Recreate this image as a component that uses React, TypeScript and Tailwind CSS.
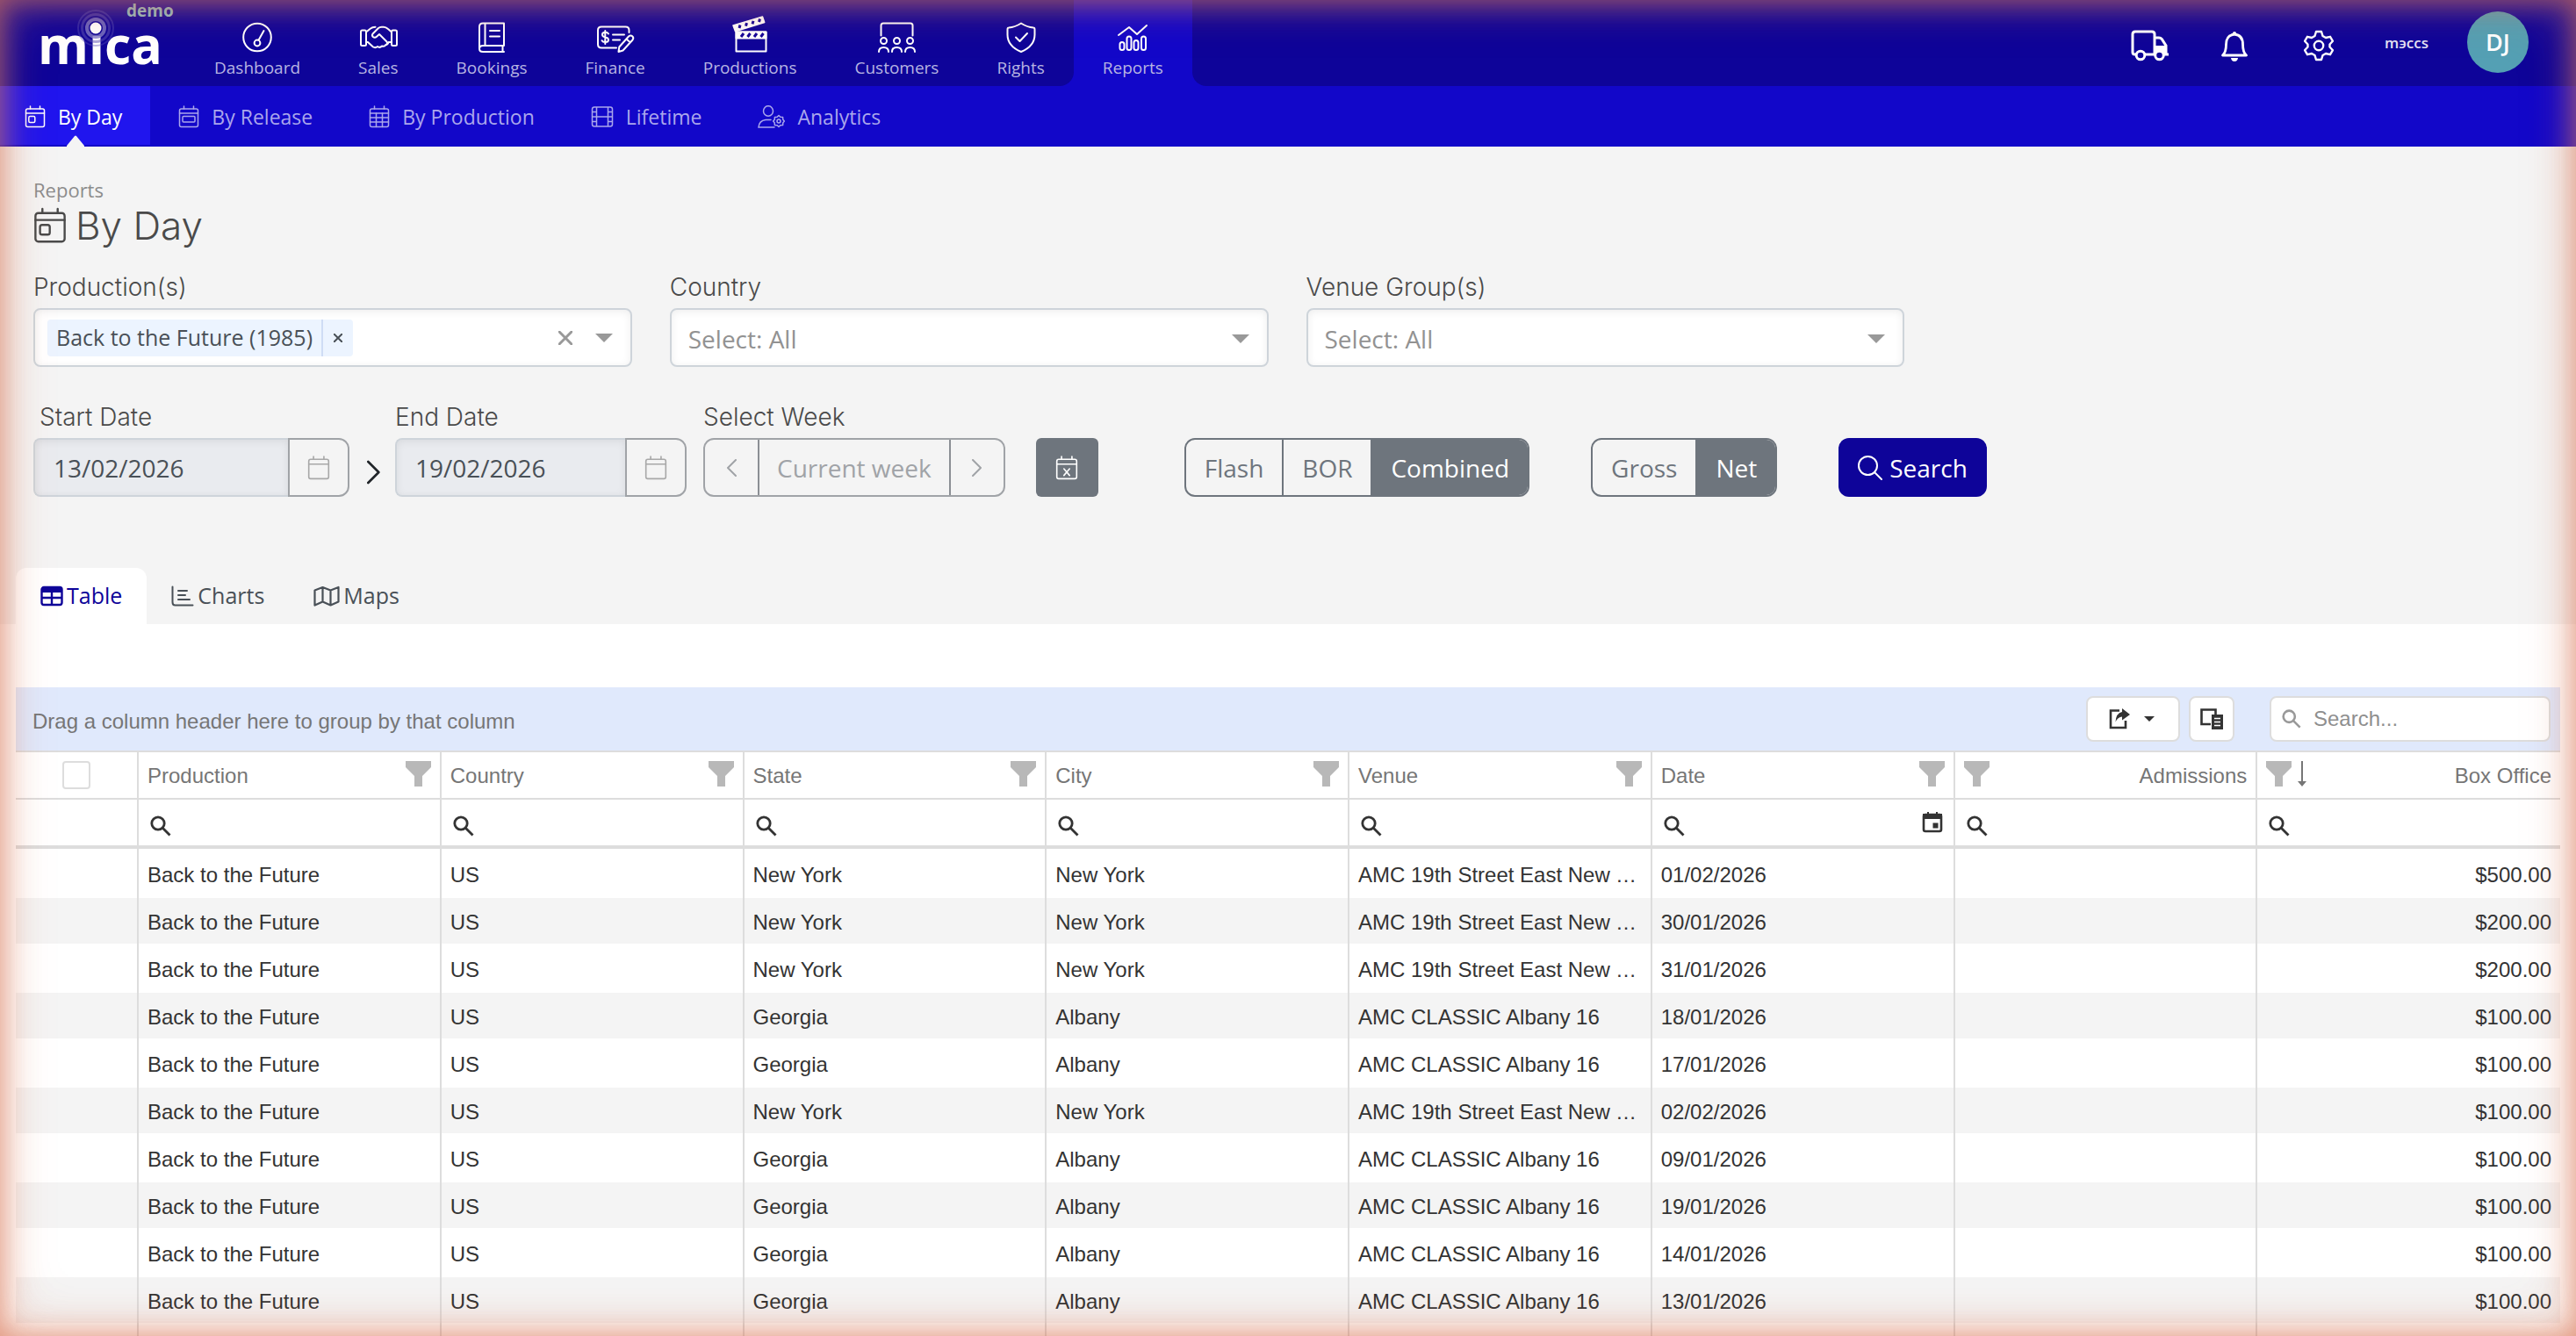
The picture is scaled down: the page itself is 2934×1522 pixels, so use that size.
import type { ReactNode } from "react";
import clsx from "clsx";

type Column = {
  name: string;
  numeric?: boolean;
  date?: boolean;
  sorted?: boolean;
};

const columns: Column[] = [
  { name: "Production" },
  { name: "Country" },
  { name: "State" },
  { name: "City" },
  { name: "Venue" },
  { name: "Date", date: true },
  { name: "Admissions", numeric: true },
  { name: "Box Office", numeric: true, sorted: true },
];

const east = "AMC 19th Street East New York";
const albany = "AMC CLASSIC Albany 16";

const rows = [
  ["Back to the Future", "US", "New York", "New York", east, "01/02/2026", "", "$500.00"],
  ["Back to the Future", "US", "New York", "New York", east, "30/01/2026", "", "$200.00"],
  ["Back to the Future", "US", "New York", "New York", east, "31/01/2026", "", "$200.00"],
  ["Back to the Future", "US", "Georgia", "Albany", albany, "18/01/2026", "", "$100.00"],
  ["Back to the Future", "US", "Georgia", "Albany", albany, "17/01/2026", "", "$100.00"],
  ["Back to the Future", "US", "New York", "New York", east, "02/02/2026", "", "$100.00"],
  ["Back to the Future", "US", "Georgia", "Albany", albany, "09/01/2026", "", "$100.00"],
  ["Back to the Future", "US", "Georgia", "Albany", albany, "19/01/2026", "", "$100.00"],
  ["Back to the Future", "US", "Georgia", "Albany", albany, "14/01/2026", "", "$100.00"],
  ["Back to the Future", "US", "Georgia", "Albany", albany, "13/01/2026", "", "$100.00"],
  ["", "", "", "", "", "", "", ""],
];

const NavSvg = ({ children }: { children: ReactNode }) => (
  <svg
    viewBox="0 0 44 44"
    className="size-11 overflow-visible text-white"
    fill="none"
    stroke="currentColor"
    strokeWidth="2"
    strokeLinecap="round"
    strokeLinejoin="round"
    aria-hidden="true"
  >
    {children}
  </svg>
);

const mainNav = [
  {
    label: "Dashboard",
    icon: (
      <NavSvg>
        <circle cx="22" cy="26.5" r="15.8" />
        <circle cx="22" cy="33" r="3.4" />
        <path d="M23.5 29.8 29.5 19" />
      </NavSvg>
    ),
  },
  {
    label: "Sales",
    icon: (
      <NavSvg>
        <rect x="2" y="18.5" width="6" height="17.5" rx="1.5" />
        <rect x="37" y="18.5" width="6" height="17.5" rx="1.5" />
        <path d="M8 20.500l5-4q2-1.800 5.500-1.800" />
        <path d="M37 20.500 33 17q-2.500-2.300-5-2.300h-2.500q-2 0-3.500 1.300l-6.500 6.500q-1.300 1.700.3 3.500 2.200 1.500 4.200-.3l3-2.700 8.500 8.500q1.500 2.500-.8 3.500" />
        <path d="M8 32h2l6 5.500q2.500 1.500 5-.5 2.500 2 5-.5 3 .8 4.500-1.500 2.800-.5 3-3H37" />
      </NavSvg>
    ),
  },
  {
    label: "Bookings",
    icon: (
      <NavSvg>
        <path d="M36 10.500H12q-4 0-4 4V39M36 10.500V36H12q-4 0-4 3.500t4 3.500h24M34.500 36v7M14.500 10.500V36M20 19h11M20 25.500h11" />
      </NavSvg>
    ),
  },
  {
    label: "Finance",
    icon: (
      <NavSvg>
        <path d="M37.500 21v-2.500q0-4-4-4H6q-4 0-4 4v16q0 4 4 4h17" />
        <path d="M14 22.500q-1-1.700-3.700-1.700-3.300 0-3.300 2.600 0 2.100 3.300 2.900 3.700.8 3.700 3.200 0 2.600-3.700 2.600-2.700 0-3.700-1.900M10.300 19v15M19 23.500h13M19 29.500h8" />
        <path d="M37 25.500q2.200-2 4.200-.2t.3 4.200L30.500 41.500l-5 1.500.8-5.500z M34.500 28.500l4 3.500" />
      </NavSvg>
    ),
  },
  {
    label: "Productions",
    icon: (
      <NavSvg>
        <path d="M6.500 20.500h34V42.500h-34z" />
        <path d="M6.500 20.500h34v7h-34z" fill="currentColor" />
        <path d="M3 13 36.500 3l2.200 6.500L5.500 19.800z" fill="currentColor" strokeWidth="1.500" />
        <path
          d="M12 26l3-4M19.500 26l3-4M27 26l3-4M34.500 26l3-4M10 16l1-3.500M17.500 13.700l1-3.500M25 11.400l1-3.500M32.500 9l1-3.500"
          className="text-[#12049a]"
          strokeWidth="3"
          strokeLinecap="butt"
        />
      </NavSvg>
    ),
  },
  {
    label: "Customers",
    icon: (
      <NavSvg>
        <path d="M4.500 24.500V13q0-2.500 2.500-2.500h31q2.500 0 2.500 2.500v11.500" />
        <circle cx="7.500" cy="30.500" r="3.500" />
        <circle cx="22.500" cy="30.500" r="3.500" />
        <circle cx="37.500" cy="30.500" r="3.500" />
        <path d="M2 43q0-5 5.500-5t5.500 5M17 43q0-5 5.500-5t5.500 5M32 43q0-5 5.500-5t5.500 5" />
      </NavSvg>
    ),
  },
  {
    label: "Rights",
    icon: (
      <NavSvg>
        <path d="M22 10.500q7 4.500 14 5 1.500 0 1.500 2v6q0 13-15.500 19.500Q6.500 36.500 6.500 23.500v-6q0-2 1.500-2 7-.5 14-5z" />
        <path d="M16 26.500l4.500 4.500 8.500-9" />
      </NavSvg>
    ),
  },
  {
    label: "Reports",
    icon: (
      <NavSvg>
        <path d="M6 24l12-9 9 8 11-10" />
        <rect x="7.500" y="32" width="5" height="9" rx="2.500" />
        <rect x="15.500" y="25.500" width="5" height="15.500" rx="2.500" />
        <rect x="23.500" y="30" width="5" height="11" rx="2.500" />
        <rect x="32" y="25.500" width="5" height="15.500" rx="2.500" />
      </NavSvg>
    ),
  },
];

const CalendarIcon = ({ className, children }: { className?: string; children?: ReactNode }) => (
  <svg
    viewBox="0 0 24 26"
    className={className}
    fill="none"
    stroke="currentColor"
    strokeWidth="1.500"
    strokeLinecap="round"
    strokeLinejoin="round"
    aria-hidden="true"
  >
    <rect x="1.500" y="4" width="21" height="20.500" rx="2" />
    <path d="M1.500 9h21M6.500 1v3M17.500 1v3" />
    {children}
  </svg>
);

const DayMark = () => <rect x="4.800" y="12.500" width="7" height="7" rx="1.500" />;

const subNav = [
  {
    label: "By Day",
    icon: (
      <CalendarIcon className="h-[26px] w-6">
        <DayMark />
      </CalendarIcon>
    ),
  },
  {
    label: "By Release",
    icon: (
      <CalendarIcon className="h-[26px] w-6">
        <rect x="5" y="12.500" width="14" height="6.500" rx="1" />
      </CalendarIcon>
    ),
  },
  {
    label: "By Production",
    icon: (
      <CalendarIcon className="h-[26px] w-6">
        <path d="M1.500 14h21M1.500 19h21M8.500 9v15.500M15.500 9v15.500" />
      </CalendarIcon>
    ),
  },
  {
    label: "Lifetime",
    icon: (
      <svg viewBox="0 0 26 26" className="size-[26px]" fill="none" stroke="currentColor" strokeWidth="1.500" aria-hidden="true">
        <rect x="1.500" y="2" width="23" height="22" rx="2.500" />
        <path d="M6.500 2v22M19.500 2v22M6.500 13h13M1.500 7.500h5M1.500 13h5M1.500 18.500h5M19.500 7.500h5M19.500 13h5M19.500 18.500h5" />
      </svg>
    ),
  },
  {
    label: "Analytics",
    icon: (
      <svg viewBox="0 0 31 26" className="h-[26px] w-[31px]" fill="none" stroke="currentColor" strokeWidth="1.500" strokeLinecap="round" aria-hidden="true">
        <ellipse cx="12" cy="6.500" rx="5.500" ry="5.800" />
        <path d="M15 16.500H9q-7.500 1-8 8.500h18" />
        <path d="M24 11.500l1.800 1.800 2.800.2.200 2.700 1.500 1.800-1.500 1.900-.2 2.700-2.800.2L24 24.500l-1.800-1.700-2.800-.2-.2-2.700-1.500-1.900 1.500-1.800.2-2.700 2.800-.2z" strokeLinejoin="round" />
        <circle cx="24" cy="18" r="2" />
      </svg>
    ),
  },
];

const SearchIcon = ({ className }: { className?: string }) => (
  <svg viewBox="0 0 24 24" className={className} fill="none" stroke="currentColor" strokeWidth="2.800" aria-hidden="true">
    <circle cx="9" cy="9" r="7.200" />
    <path d="M14 14l8.500 8.500" />
  </svg>
);

const FunnelIcon = () => (
  <svg viewBox="0 0 29 29" className="size-[29px] shrink-0 text-[#b8b8b8]" fill="currentColor" aria-hidden="true">
    <path d="M0 0h29v7l-10 10v12h-9V17L0 7z" />
  </svg>
);

const Caret = ({ className }: { className?: string }) => (
  <svg viewBox="0 0 20 10" className={clsx("h-2.5 w-5", className)} fill="currentColor" aria-hidden="true">
    <path d="M0 0h20L10 10z" />
  </svg>
);

const Chevron = ({ className, flip }: { className?: string; flip?: boolean }) => (
  <svg viewBox="0 0 12 20" className={className} fill="none" stroke="currentColor" strokeWidth="2" strokeLinecap="round" strokeLinejoin="round" aria-hidden="true">
    <path d={flip ? "M11 1 2 10l9 9" : "M1 1l9 9-9 9"} />
  </svg>
);

const Logo = () => (
  <a href="#" aria-label="mica demo" className="relative block w-[211px] shrink-0 text-white">
    <span className="block pt-6 pl-[43px] text-[59px] leading-[52px] font-bold">mica</span>
    <svg viewBox="0 0 48 48" className="absolute top-2 left-[85px] size-12" fill="none" aria-hidden="true">
      <circle cx="24" cy="24" r="20" stroke="#5b52b8" strokeOpacity=".4" strokeWidth="2" />
      <circle cx="24" cy="24" r="15.500" stroke="#5b52b8" strokeOpacity=".5" strokeWidth="3" />
      <circle cx="24" cy="24" r="10" stroke="#7f7ac6" strokeOpacity=".8" strokeWidth="4" />
      <circle cx="24" cy="24" r="6.500" fill="#fff" />
    </svg>
    <span className="absolute top-0 left-[144px] text-[19px] leading-6 font-bold text-[#8fbcc4]">demo</span>
  </a>
);

const Header = () => (
  <header>
    <div className="flex h-[98px] bg-[#0e0499]">
      <Logo />
      <nav className="flex" aria-label="Main">
        {mainNav.map(({ label, icon }) => {
          const active = label === "Reports";
          return (
            <a
              key={label}
              href="#"
              className={clsx(
                "relative flex flex-col items-center gap-1 px-[33px] pt-4 text-[19px] leading-[26px] text-[#b7b4e2]",
                active && "bg-[#1207c9]",
              )}
            >
              {icon}
              {label}
              {active && (
                <>
                  <span className="absolute right-full bottom-0 size-4 bg-[#1207c9]">
                    <span className="block size-4 rounded-br-2xl bg-[#0e0499]" />
                  </span>
                  <span className="absolute bottom-0 left-full size-4 bg-[#1207c9]">
                    <span className="block size-4 rounded-bl-2xl bg-[#0e0499]" />
                  </span>
                </>
              )}
            </a>
          );
        })}
      </nav>
      <div className="ml-auto flex items-center pr-[54px] text-white">
        <button type="button" aria-label="Deliveries" className="mt-1.5 mr-[60px]">
          <svg viewBox="0 0 43 36" className="h-9 w-[43px]" fill="none" stroke="currentColor" strokeWidth="3" aria-hidden="true">
            <path d="M6 28H4.500Q2 28 2 25.500V5q0-3 3-3h19q3 0 3 3v23M16 28h11" />
            <path d="M27 9h5q2 0 3.200 1.500L40 18v10" />
            <path d="M27 18h14v11h-3q-1-4-5.500-4T27 28z" fill="currentColor" stroke="none" />
            <path d="M38 28h5" />
            <circle cx="11" cy="29" r="4.800" />
            <circle cx="32.500" cy="29" r="4.800" fill="#0e0499" />
          </svg>
        </button>
        <button type="button" aria-label="Notifications" className="mt-1.5 mr-16">
          <svg viewBox="0 0 30 35" className="h-[35px] w-[30px]" fill="none" stroke="currentColor" strokeWidth="2.800" strokeLinejoin="round" aria-hidden="true">
            <path d="M15 4q9.500 1 9.500 11.500 0 9 4 12.500H1.500q4-3.500 4-12.500Q5.500 5 15 4z" />
            <path d="M13 4V2.500q0-1.500 2-1.500t2 1.500V4z" fill="currentColor" stroke="none" />
            <path d="M11 31h8q-.5 4-4 4t-4-4z" fill="currentColor" stroke="none" />
          </svg>
        </button>
        <button type="button" aria-label="Settings" className="mt-1.5 mr-[58px]">
          <svg viewBox="0 0 34 36" className="h-9 w-[34px]" fill="none" stroke="currentColor" strokeWidth="2.400" strokeLinejoin="round" aria-hidden="true">
            <path d="M14 2h6l1.500 5 3.500 2 5-1.200 3 5L29.500 16.500v3L33 23.200l-3 5L25 27l-3.500 2L20 34h-6l-1.500-5L9 27l-5 1.200-3-5 3.500-3.700v-3L1 12.800l3-5L9 9l3.500-2z" />
            <circle cx="17" cy="18" r="5.200" />
          </svg>
        </button>
        <span className="mr-11 text-[17px] leading-6 font-semibold text-[#e4e2f5]">mэccs</span>
        <button
          type="button"
          className="mb-0.5 size-[70px] rounded-full bg-[#54a0b4] text-[27px] leading-9 font-semibold"
        >
          DJ
        </button>
      </div>
    </div>
    <nav className="flex h-[69px] bg-[#1207c9] pb-0.5" aria-label="Reports">
      {subNav.map(({ label, icon }, i) => (
        <a
          key={label}
          href="#"
          className={clsx(
            "relative flex items-center gap-3.5 px-8 pt-0.5 text-[23px] leading-8",
            i === 0 ? "bg-[#2015ee] pl-7 text-white" : "text-[#aaa6ec]",
          )}
        >
          {icon}
          {label}
          {i === 0 && (
            <svg viewBox="0 0 20 14" className="absolute top-14 left-1/2 h-3.5 w-5 -translate-x-1/2 text-[#f4f4f4]" fill="currentColor" aria-hidden="true">
              <path d="M0 14v-2L9 1q1-1 2 0l9 11v2z" />
            </svg>
          )}
        </a>
      ))}
    </nav>
  </header>
);

const labelClass = "mb-1 block font-[Inter,'Open_Sans',sans-serif] text-[28px] leading-10 font-light text-[#4a4a4a]";
const fieldClass =
  "h-[67px] w-full rounded-lg border-2 border-[#ced4da] bg-white shadow-[inset_0_2px_10px_rgba(0,0,0,0.07)]";

const SelectField = ({ id, label }: { id: string; label: string }) => (
  <div>
    <label htmlFor={id} className={labelClass}>
      {label}
    </label>
    <div className="relative">
      <select id={id} className={clsx(fieldClass, "appearance-none pt-0.5 pl-[19px] text-[28px] text-[#929292]")}>
        <option>Select: All</option>
      </select>
      <Caret className="pointer-events-none absolute top-[30px] right-[22px] text-[#999]" />
    </div>
  </div>
);

type DateFieldProps = {
  id: string;
  label: string;
  value: string;
  className: string;
  indent?: boolean;
};

const DateField = ({ id, label, value, className, indent }: DateFieldProps) => (
  <div className={className}>
    <label htmlFor={id} className={clsx(labelClass, indent && "pl-[7px]")}>
      {label}
    </label>
    <div className="flex h-[67px]">
      <input
        id={id}
        readOnly
        defaultValue={value}
        className="w-full min-w-0 rounded-l-lg border-2 border-r-0 border-[#ced4da] bg-[#e9ebef] pl-[21px] text-[28px] text-[#495057] shadow-[inset_0_2px_10px_rgba(0,0,0,0.07)]"
      />
      <button
        type="button"
        aria-label={`Pick ${label}`}
        className="flex w-[70px] shrink-0 items-center justify-center rounded-r-xl border-2 border-[#a0a3a7] text-[#a8a8a8]"
      >
        <CalendarIcon className="h-7 w-[26px]" />
      </button>
    </div>
  </div>
);

const ToggleGroup = ({ options, active }: { options: string[]; active: string }) => (
  <div className="flex h-[67px] overflow-hidden rounded-xl border-2 border-[#6e757d] text-[28px]">
    {options.map((option, i) => (
      <button
        key={option}
        type="button"
        className={clsx(
          "px-[21px]",
          i > 0 && "border-l-2 border-[#6e757d]",
          option === active ? "bg-[#6e757d] text-white" : "text-[#6e757d]",
        )}
      >
        {option}
      </button>
    ))}
  </div>
);

const Filters = () => (
  <form>
    <div className="mt-6 grid grid-cols-4 gap-x-[43px]">
      <div>
        <label htmlFor="productions" className={labelClass}>
          Production(s)
        </label>
        <div className={clsx(fieldClass, "flex items-center px-3.5")}>
          <span className="flex h-[42px] shrink-0 items-center rounded-sm bg-[#ecf4ff] text-[25px] text-[#495057]">
            <span className="px-2.5">Back to the Future (1985)</span>
            <button type="button" aria-label="Remove" className="flex h-full items-center border-l-2 border-[#cfdcf5] px-3">
              <svg viewBox="0 0 10 10" className="size-2.5" stroke="currentColor" strokeWidth="2" aria-hidden="true">
                <path d="M0 0l10 10M10 0 0 10" />
              </svg>
            </button>
          </span>
          <input id="productions" className="min-w-0 flex-1 outline-none" />
          <button type="button" aria-label="Clear" className="mr-[26px] text-[#999]">
            <svg viewBox="0 0 16 16" className="size-4" stroke="currentColor" strokeWidth="3" aria-hidden="true">
              <path d="M0 0l16 16M16 0 0 16" />
            </svg>
          </button>
          <Caret className="mr-1.5 text-[#999]" />
        </div>
      </div>
      <SelectField id="country" label="Country" />
      <SelectField id="venue-groups" label="Venue Group(s)" />
    </div>

    <div className="mt-[37px] flex items-end">
      <DateField id="start-date" label="Start Date" value="13/02/2026" className="w-[360px]" indent />
      <Chevron className="mr-4 ml-5 mb-2.5 h-9 w-4 text-[#212529]" />
      <DateField id="end-date" label="End Date" value="19/02/2026" className="w-[332px]" />
      <div className="ml-[19px]">
        <span className={labelClass}>Select Week</span>
        <div className="flex h-[67px] rounded-xl border-2 border-[#a0a3a7] text-[28px] text-[#a0a3a7]">
          <button type="button" aria-label="Previous week" className="flex w-[60px] items-center justify-center">
            <Chevron flip className="h-5 w-3" />
          </button>
          <button type="button" className="border-x-2 border-[#8b8f94] px-5">
            Current week
          </button>
          <button type="button" aria-label="Next week" className="flex w-[60px] items-center justify-center">
            <Chevron className="h-5 w-3" />
          </button>
        </div>
      </div>
      <button
        type="button"
        aria-label="Clear dates"
        className="ml-[35px] flex h-[67px] w-[71px] items-center justify-center rounded-md bg-[#6e757d] text-white"
      >
        <CalendarIcon className="h-7 w-[26px]">
          <path d="M9 14l6 7M15 14l-6 7" />
        </CalendarIcon>
      </button>
      <div className="ml-[98px]">
        <ToggleGroup options={["Flash", "BOR", "Combined"]} active="Combined" />
      </div>
      <div className="ml-[70px]">
        <ToggleGroup options={["Gross", "Net"]} active="Net" />
      </div>
      <button
        type="submit"
        className="ml-[70px] flex h-[67px] items-center gap-2 rounded-xl bg-[#0e0499] px-[22px] text-[28px] text-white"
      >
        <svg viewBox="0 0 28 28" className="size-7" fill="none" stroke="currentColor" strokeWidth="2" strokeLinecap="round" aria-hidden="true">
          <circle cx="11.500" cy="11.500" r="10.500" />
          <path d="M19 19l8 8" />
        </svg>
        Search
      </button>
    </div>
  </form>
);

const tabs = [
  {
    label: "Table",
    icon: (
      <svg viewBox="0 0 26 24" className="h-6 w-[26px]" fill="none" stroke="currentColor" strokeWidth="2.400" aria-hidden="true">
        <rect x="1.500" y="2" width="23" height="20" rx="2.500" />
        <path d="M2 3h22v5H2z" fill="currentColor" stroke="none" />
        <path d="M1.500 14h23M13 7v15" />
      </svg>
    ),
  },
  {
    label: "Charts",
    icon: (
      <svg viewBox="0 0 26 24" className="h-6 w-[26px]" fill="none" stroke="currentColor" strokeWidth="2" strokeLinecap="round" aria-hidden="true">
        <path d="M1.500 1.500V19q0 3.500 3 3.500h20M8 6h10M8 11h8M8 16h13" />
      </svg>
    ),
  },
  {
    label: "Maps",
    icon: (
      <svg viewBox="0 0 30 24" className="h-6 w-[30px]" fill="none" stroke="currentColor" strokeWidth="2.200" strokeLinejoin="round" aria-hidden="true">
        <path d="M1.500 5.500 10.500 2l9 3.500 9-3.500v16.500l-9 4-9-4-9 4zM10.500 2v16.500M19.500 5.500v17" />
      </svg>
    ),
  },
];

const buttonClass = "flex h-[52px] items-center justify-center rounded-lg border-2 border-[#ddd] bg-white text-[#333]";

const Toolbar = () => (
  <div className="flex h-[72px] items-center bg-[#e0e9fc] pr-[11px] pl-[19px]">
    <span className="mt-1.5 flex-1 text-[#767676]">Drag a column header here to group by that column</span>
    <button type="button" aria-label="Export" className={clsx(buttonClass, "mr-2.5 w-[107px] gap-4 pr-1")}>
      <svg viewBox="0 0 24 24" className="size-6" fill="none" stroke="currentColor" strokeWidth="2.600" aria-hidden="true">
        <path d="M12 2.500H2v19.500h17v-8" />
        <path d="M15 0l9 7-9 6.500V9.500q-5 .5-7.500 6Q8 5.500 15 4z" fill="currentColor" stroke="none" />
      </svg>
      <svg viewBox="0 0 12 6" className="h-1.5 w-3" fill="currentColor" aria-hidden="true">
        <path d="M0 0h12L6 6z" />
      </svg>
    </button>
    <button type="button" aria-label="Column chooser" className={clsx(buttonClass, "mr-10 w-[52px]")}>
      <svg viewBox="0 0 26 24" className="h-6 w-[26px]" fill="none" stroke="currentColor" strokeWidth="2.600" aria-hidden="true">
        <path d="M12 18H1.500V1.500h16V7" />
        <path d="M13 7h13v17H13z" fill="currentColor" stroke="none" />
        <path d="M16 11.500h7M16 15.500h7M16 19.500h7" stroke="#fff" strokeWidth="1.600" />
      </svg>
    </button>
    <label className="flex h-[52px] w-80 items-center gap-3.5 rounded-lg border-2 border-[#ddd] bg-white px-3">
      <SearchIcon className="size-[22px] shrink-0 text-[#999]" />
      <input placeholder="Search..." aria-label="Search table" className="w-full min-w-0 outline-none placeholder:text-[#8f8f8f]" />
    </label>
  </div>
);

const Grid = () => (
  <table className="w-full table-fixed border-separate border-spacing-0 text-left text-[#333]">
    <colgroup>
      <col className="w-[140px]" />
      {columns.map(({ name }) => (
        <col key={name} />
      ))}
    </colgroup>
    <thead>
      <tr className="h-14 text-[#767676]">
        <th className="border-y-2 border-r-2 border-[#ddd] p-0">
          <input
            type="checkbox"
            aria-label="Select all"
            className="mx-auto block size-8 appearance-none rounded-sm border-2 border-[#ddd] bg-white"
          />
        </th>
        {columns.map(({ name, numeric, sorted }) => (
          <th key={name} className="border-y-2 border-r-2 border-[#ddd] px-2.5 pt-0.5 pb-0 font-normal last:border-r-0">
            <div className={clsx("flex items-start justify-between", numeric && "flex-row-reverse")}>
              <span className="leading-[34px]">{name}</span>
              <span className="flex gap-[7px]">
                <FunnelIcon />
                {sorted && (
                  <svg viewBox="0 0 10 29" className="h-[29px] w-2.5" fill="currentColor" aria-hidden="true">
                    <path d="M4 0h2v23h4l-5 6-5-6h4z" />
                  </svg>
                )}
              </span>
            </div>
          </th>
        ))}
      </tr>
      <tr className="h-14">
        <td className="border-r-2 border-b-4 border-[#ddd] p-0" />
        {columns.map(({ name, date }) => (
          <td key={name} className="border-r-2 border-b-4 border-[#ddd] px-3 py-0 last:border-r-0">
            <div className="flex items-center justify-between">
              <SearchIcon className="mt-2 ml-px size-6 shrink-0" />
              <input aria-label={`Filter ${name}`} className="h-10 w-full min-w-0 outline-none" />
              {date && (
                <svg viewBox="0 0 24 26" className="h-[26px] w-6 shrink-0" fill="none" stroke="currentColor" strokeWidth="2.600" aria-hidden="true">
                  <rect x="2" y="4" width="20" height="19" rx="2" />
                  <path d="M1 3h22v6H1zM6 1h2v3H6zM16 1h2v3h-2zM12.500 13.500h6v6h-6z" fill="currentColor" stroke="none" />
                </svg>
              )}
            </div>
          </td>
        ))}
      </tr>
    </thead>
    <tbody>
      {rows.map((row, i) => (
        <tr key={i} className="h-14 even:h-[52px] even:bg-[#f4f4f4]">
          <td className="border-r-2 border-[#ddd] p-0" />
          {row.map((value, j) => (
            <td
              key={j}
              className={clsx(
                "truncate border-r-2 border-[#ddd] px-2.5 pt-1 pb-0 last:border-r-0",
                columns[j].numeric && "text-right",
              )}
            >
              {value}
            </td>
          ))}
        </tr>
      ))}
    </tbody>
  </table>
);

const App = () => {
  return (
    <div className="flex h-screen flex-col overflow-hidden bg-[#f4f4f4] font-['Open_Sans','Noto_Sans',sans-serif]">
      <Header />
      <main className="flex-1">
        <div className="pt-[34px] pr-10 pl-[38px]">
          <p className="text-[22px] leading-[30px] text-[#8c8c8c]">Reports</p>
          <h1 className="flex items-center gap-2.5 font-[Inter,'Open_Sans',sans-serif] text-[44px] leading-[52px] font-light text-[#4a4a4a]">
            <CalendarIcon className="h-11 w-[38px]">
              <DayMark />
            </CalendarIcon>
            By Day
          </h1>
          <Filters />
        </div>
        <div className="mt-[81px] flex pl-[18px]" role="tablist">
          {tabs.map(({ label, icon }, i) => (
            <button
              key={label}
              type="button"
              role="tab"
              aria-selected={i === 0}
              className={clsx(
                "flex h-16 items-center gap-1 px-7 text-[25px]",
                i === 0 ? "rounded-t-xl bg-white text-[#0e0499]" : "text-[#495057]",
              )}
            >
              {icon}
              {label}
            </button>
          ))}
        </div>
        <section className="bg-white px-[18px] pt-[72px] font-['Liberation_Sans',sans-serif] text-2xl">
          <Toolbar />
          <Grid />
        </section>
      </main>
      <div className="pointer-events-none fixed inset-0 shadow-[inset_0_0_30px_rgba(217,119,87,0.6),inset_0_0_50px_rgba(217,119,87,0.4),inset_0_0_70px_rgba(217,119,87,0.15)]" />
    </div>
  );
};

export default App;
